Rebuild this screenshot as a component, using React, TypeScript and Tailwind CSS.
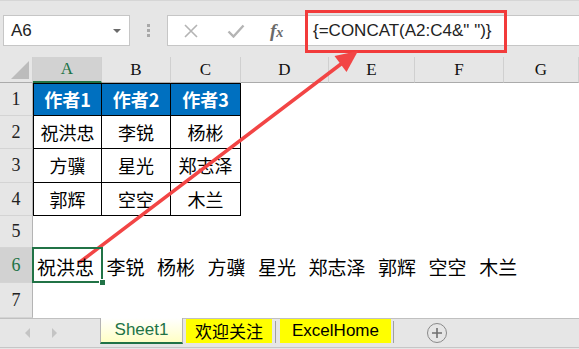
import React from "react";

const SERIF = { fontFamily: '"Liberation Serif", "Noto Serif CJK SC", serif' };
const SANS = { fontFamily: '"Liberation Sans", "Noto Sans CJK SC", sans-serif' };
const CJK = { fontFamily: '"Noto Sans CJK SC", "Liberation Sans", sans-serif' };

const colLetters = ["A", "B", "C", "D", "E", "F", "G"];
const tableHead = ["作者1", "作者2", "作者3"];
const tableRows = [
  ["祝洪忠", "李锐", "杨彬"],
  ["方骥", "星光", "郑志泽"],
  ["郭辉", "空空", "木兰"],
];
const row6 = ["祝洪忠", "李锐", "杨彬", "方骥", "星光", "郑志泽", "郭辉", "空空", "木兰"];

function RowHeader({ n, selected }: { n: number; selected?: boolean }) {
  return (
    <div
      className={`flex items-center justify-center border-r border-b border-r-[#b4b4b4] border-b-[#d4d4d4] text-[18px] ${
        selected ? "bg-[#d2d2d2] text-[#217346]" : "bg-[#e6e6e6] text-[#222]"
      }`}
      style={SERIF}
    >
      {n}
    </div>
  );
}

export default function App() {
  const cells: React.ReactNode[] = [];

  // header row
  cells.push(
    <div key="corner" className="relative bg-[#e6e6e6] border-r border-b border-r-[#d0d0d0] border-b-[#ababab]">
      <div className="absolute right-[3px] bottom-[3px] w-0 h-0 border-l-[18px] border-l-transparent border-b-[18px] border-b-[#bcbcbc]" />
    </div>
  );
  colLetters.forEach((c, i) => {
    const sel = i === 0;
    cells.push(
      <div
        key={"h" + c}
        className={`flex items-center justify-center text-[17px] border-r border-r-[#d0d0d0] ${
          sel ? "bg-[#d2d2d2] text-[#217346] border-b-2 border-b-[#217346]" : "bg-[#e6e6e6] text-[#111] border-b border-b-[#ababab]"
        }`}
        style={SERIF}
      >
        {c}
      </div>
    );
  });

  // row 1
  cells.push(<RowHeader key="r1" n={1} />);
  tableHead.forEach((t, i) => {
    cells.push(
      <div
        key={"t" + i}
        className={`flex items-center justify-center bg-[#0070c0] text-white font-bold text-[18px] border-r border-b border-t border-black ${
          i === 0 ? "border-l" : ""
        }`}
        style={CJK}
      >
        {t}
      </div>
    );
  });
  for (let k = 0; k < 4; k++) cells.push(<div key={"e1" + k} />);

  // rows 2-4
  tableRows.forEach((r, ri) => {
    cells.push(<RowHeader key={"r" + (ri + 2)} n={ri + 2} />);
    r.forEach((t, i) => {
      cells.push(
        <div
          key={"c" + ri + i}
          className={`flex items-center justify-center text-[18px] text-black border-r border-b border-black ${
            i === 0 ? "border-l" : ""
          }`}
          style={CJK}
        >
          {t}
        </div>
      );
    });
    for (let k = 0; k < 4; k++) cells.push(<div key={"e" + ri + k} />);
  });

  // row 5
  cells.push(<RowHeader key="r5" n={5} />);
  for (let k = 0; k < 7; k++) cells.push(<div key={"e5" + k} />);

  // row 6
  cells.push(<RowHeader key="r6" n={6} selected />);
  cells.push(
    <div key="a6" className="relative z-10 flex items-center">
      <div className="flex gap-[12.5px] whitespace-nowrap pl-[4px] pt-[1px] text-[19px] text-black leading-none" style={CJK}>
        {row6.map((n, i) => (
          <span key={i}>{n}</span>
        ))}
      </div>
      <div className="absolute left-[-1px] top-[-1px] w-[71px] h-[36px] border-2 border-[#217346]" />
      <div className="absolute left-[66px] top-[31px] w-[7px] h-[7px] bg-[#217346] border border-white" />
    </div>
  );
  for (let k = 0; k < 6; k++) cells.push(<div key={"e6" + k} />);

  // row 7
  cells.push(<RowHeader key="r7" n={7} />);
  for (let k = 0; k < 7; k++) cells.push(<div key={"e7" + k} />);

  return (
    <div className="relative w-[579px] h-[349px] overflow-hidden bg-[#e6e6e6]" style={SANS}>
      {/* formula bar area */}
      <div className="h-[57px] flex items-start pt-[14px] border-t border-[#d6d6d6]">
        <div className="ml-[3px] w-[127px] h-[31px] bg-white border border-[#c6c6c6] flex items-center justify-between pl-[7px] pr-[8px]">
          <span className="text-[17px] text-[#222]">A6</span>
          <div className="w-0 h-0 border-l-[4px] border-r-[4px] border-t-[4px] border-l-transparent border-r-transparent border-t-[#6a6a6a]" />
        </div>
        <div className="w-[37px] h-[31px] flex flex-col items-center justify-center gap-[2px]">
          <div className="w-[3px] h-[3px] bg-[#a8a8a8]" />
          <div className="w-[3px] h-[3px] bg-[#a8a8a8]" />
          <div className="w-[3px] h-[3px] bg-[#a8a8a8]" />
        </div>
        <div className="w-[139px] h-[31px] bg-white border border-[#c6c6c6] flex items-center">
          <svg width="16" height="14" viewBox="0 0 16 14" className="ml-[15px]">
            <path d="M2 1 L14 13 M14 1 L2 13" stroke="#b4b4b4" strokeWidth="1.6" fill="none" />
          </svg>
          <svg width="18" height="14" viewBox="0 0 18 14" className="ml-[28px]">
            <path d="M1.5 7.5 L6.5 12.5 L16.5 1.5" stroke="#b4b4b4" strokeWidth="2.4" fill="none" />
          </svg>
          <span
            className="ml-[25px] text-[19px] italic font-semibold text-[#6a6a6a] leading-none"
            style={{ fontFamily: '"Liberation Serif", serif' }}
          >
            f<span className="text-[14px]">x</span>
          </span>
        </div>
        <div className="relative flex-1 h-[31px] bg-white border-y border-[#c6c6c6] flex items-center pl-[7px]">
          <span className="text-[17px] text-[#222] whitespace-pre">{'{=CONCAT(A2:C4&" ")}'}</span>
          <div className="absolute left-[-1px] top-[-6px] w-[202px] h-[43px] border-[3px] border-[#f23b3b]" />
        </div>
      </div>

      {/* sheet grid */}
      <div className="grid grid-cols-[33px_69px_69px_70px_88px_86px_89px_75px] grid-rows-[26px_33px_33px_34px_33px_32px_35px_35px] bg-white">
        {cells}
      </div>

      {/* tab bar */}
      <div className="h-[31px] bg-[#e6e6e6] border-t border-[#c0c0c0] flex items-start">
        <div className="w-[100px] h-[28px] flex items-center pl-[25px] gap-[22px]">
          <div className="w-0 h-0 border-t-[5px] border-b-[5px] border-r-[5px] border-t-transparent border-b-transparent border-r-[#c4c4c4]" />
          <div className="w-0 h-0 border-t-[5px] border-b-[5px] border-l-[5px] border-t-transparent border-b-transparent border-l-[#c4c4c4]" />
        </div>
        <div className="w-[83px] h-[26px] mt-[-1px] border-x border-[#b4b4b4] border-b-2 border-b-[#217346] bg-gradient-to-b from-white to-[#ffffc4] flex items-center justify-center text-[17px] text-[#217346]">
          Sheet1
        </div>
        <div className="ml-[3px] w-[86px] h-[24px] bg-[#ffff00] flex items-center justify-center text-[17px] text-black" style={CJK}>
          欢迎关注
        </div>
        <div className="ml-[3px] mt-[2px] w-px h-[22px] bg-[#a0a0a0]" />
        <div className="ml-[4px] w-[111px] h-[24px] bg-[#ffff00] flex items-center justify-center text-[17px] text-black">
          ExcelHome
        </div>
        <div className="ml-[2px] mt-[2px] w-px h-[22px] bg-[#a0a0a0]" />
        <div className="ml-[33px] mt-[4px] w-[20px] h-[20px] rounded-full border-[1.5px] border-[#8a8a8a] flex items-center justify-center">
          <svg width="12" height="12" viewBox="0 0 12 12">
            <path d="M6 1 V11 M1 6 H11" stroke="#707070" strokeWidth="1.6" />
          </svg>
        </div>
      </div>
      <div className="absolute left-0 bottom-[1px] w-full h-px bg-[#c6c6c6]" />

      {/* red arrow overlay */}
      <svg className="absolute left-0 top-0 pointer-events-none" width="579" height="349" viewBox="0 0 579 349">
        <line x1="80" y1="262" x2="341" y2="64" stroke="#f24545" strokeWidth="3.5" strokeLinecap="round" />
        <polygon points="358,51 346.5,72 334.5,56" fill="#f24545" />
      </svg>
    </div>
  );
}
